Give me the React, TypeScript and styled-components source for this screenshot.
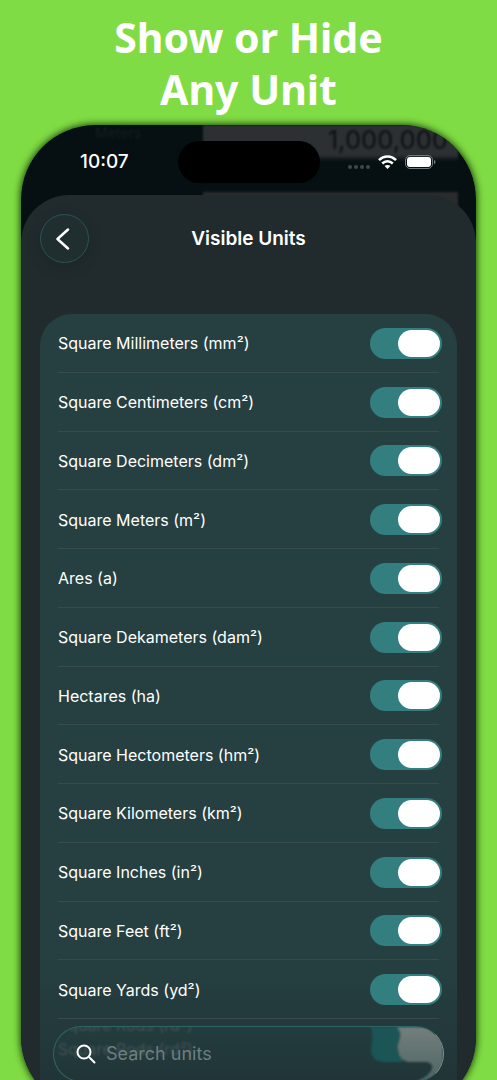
import React, { useState } from "react";
import styled, { createGlobalStyle } from "styled-components";

const GlobalStyle = createGlobalStyle`
  * { box-sizing: border-box; }
  body { margin: 0; background: #80dc44; color: #fff; font-family: Inter, "Liberation Sans", sans-serif; }
`;

const Page = styled.main`
  height: 100vh;
  overflow: hidden;
  padding: 11px 21px 0;
  background: #80dc44;
`;

const Headline = styled.h1`
  margin: 0 0 10px;
  text-align: center;
  font: 700 41px/52px "Noto Sans", "Open Sans", sans-serif;
`;

const Phone = styled.section`
  position: relative;
  display: flex;
  flex-direction: column;
  aspect-ratio: 455 / 986;
  overflow: hidden;
  border-radius: 74px;
  background: #061012;
`;

const PhoneShadow = styled.div`
  border-radius: 74px;
  box-shadow: 0 0 7px 1px rgba(10, 40, 0, 0.85);
`;

const Behind = styled.div`
  position: absolute;
  inset: 0 18px auto 182px;
  height: 90px;
  filter: blur(1px);
  background: linear-gradient(#2d3032 0 30px, #061012 36px 67px, #2a2b2d 67px);
  color: #0e1517;
  font-size: 25px;
  font-weight: 500;
  line-height: 30px;
  text-align: right;
  padding-right: 10px;
`;

const Ghost = styled.div`
  position: absolute;
  top: 0;
  left: 74px;
  filter: blur(1px);
  color: #151e20;
  font-size: 14px;
  line-height: 16px;
`;

const StatusBar = styled.header`
  position: relative;
  display: grid;
  grid-template-columns: 1fr 142px 1fr;
  align-items: center;
  height: 70px;
  padding: 4px 0 0;
`;

const Time = styled.time`
  padding-left: 59px;
  font-size: 19px;
  line-height: 22px;
  font-weight: 500;
`;

const Island = styled.div`
  height: 42px;
  border-radius: 21px;
  background: #000;
`;

const StatusIcons = styled.div`
  display: flex;
  align-items: center;
  justify-content: flex-end;
  gap: 8px;
  padding-right: 40px;
`;

const Sheet = styled.div`
  position: relative;
  flex: 1;
  display: flex;
  flex-direction: column;
  padding: 19px 19px 0;
  border-radius: 48px 48px 0 0;
  background: #212b2d;
`;

const TopBar = styled.div`
  display: grid;
  grid-template-columns: 49px 1fr 49px;
  align-items: center;
  margin-bottom: 51px;
`;

const BackButton = styled.button`
  display: grid;
  place-items: center;
  width: 49px;
  height: 49px;
  padding: 0 4px 0 0;
  border: 1px solid #2b5558;
  border-radius: 50%;
  background: #212e2f;
  box-shadow: 0 4px 12px rgba(20, 30, 32, 0.35);
  color: #fff;
`;

const Title = styled.h2`
  margin: 0;
  text-align: center;
  font-size: 19px;
  line-height: 24px;
  font-weight: 600;
`;

const Card = styled.div`
  flex: 1;
  border-radius: 32px 32px 0 0;
  background: linear-gradient(#264042 0 640px, #213436 770px);
`;

const UnitList = styled.ul`
  display: grid;
  grid-auto-rows: 1fr;
  height: 705px;
  margin: 0;
  padding: 0 15px 0 18px;
  list-style: none;
`;

const UnitRow = styled.li`
  display: flex;
  align-items: center;
  background: linear-gradient(#3a494c, #3a494c) left bottom / calc(100% - 3px) 1px no-repeat;
`;

const UnitLabel = styled.label`
  display: flex;
  flex: 1;
  align-items: center;
  justify-content: space-between;
  font-size: 16px;
  line-height: 24px;
`;

const Switch = styled.input`
  appearance: none;
  display: flex;
  justify-content: flex-start;
  width: 72px;
  height: 31px;
  margin: 0;
  padding: 2px;
  border-radius: 16px;
  background: #41585a;
  &::before {
    content: "";
    width: 42px;
    border-radius: 14px;
    background: #fff;
  }
  &:checked {
    justify-content: flex-end;
    background: #337e7e;
  }
`;

const SearchBar = styled.label`
  position: absolute;
  left: 32px;
  right: 32px;
  bottom: 29px;
  display: flex;
  align-items: center;
  gap: 10px;
  height: 56px;
  padding: 0 22px;
  overflow: hidden;
  border: 1px solid #2f6567;
  border-right-color: #83908f;
  border-radius: 28px;
  background: linear-gradient(#233c3e, #213537);
`;

const Refraction = styled.span<{ $top: number }>`
  position: absolute;
  left: 4px;
  top: ${(p) => p.$top}px;
  color: #435455;
  filter: blur(1px);
  font-size: 16px;
  line-height: 20px;
`;

const GlassGlow = styled.svg`
  position: absolute;
  top: 0;
  right: 0;
`;

const SearchInput = styled.input`
  position: relative;
  flex: 1;
  min-width: 0;
  padding: 0;
  border: 0;
  outline: 0;
  background: transparent;
  color: #fff;
  font: 400 18px/24px Inter, "Liberation Sans", sans-serif;
  &::placeholder { color: #6d7f80; opacity: 1; }
`;

const SearchIcon = styled.svg`
  position: relative;
`;

const units = [
  "Square Millimeters (mm²)",
  "Square Centimeters (cm²)",
  "Square Decimeters (dm²)",
  "Square Meters (m²)",
  "Ares (a)",
  "Square Dekameters (dam²)",
  "Hectares (ha)",
  "Square Hectometers (hm²)",
  "Square Kilometers (km²)",
  "Square Inches (in²)",
  "Square Feet (ft²)",
  "Square Yards (yd²)",
];

export default function App() {
  const [hidden, setHidden] = useState<string[]>([]);
  const toggle = (unit: string) =>
    setHidden((h) => (h.includes(unit) ? h.filter((u) => u !== unit) : [...h, unit]));

  return (
    <Page>
      <GlobalStyle />
      <Headline>
        Show or Hide
        <br />
        Any Unit
      </Headline>
      <PhoneShadow>
        <Phone>
          <Ghost aria-hidden>Meters</Ghost>
          <Behind aria-hidden>1,000,000</Behind>
          <StatusBar>
            <Time>10:07</Time>
            <Island />
            <StatusIcons>
              <svg width="22" height="14" viewBox="0 0 22 14" fill="#3d494c">
                <circle cx="2" cy="12" r="2" />
                <circle cx="8" cy="12" r="2" />
                <circle cx="14" cy="12" r="2" />
                <circle cx="20" cy="12" r="2" />
              </svg>
              <svg width="19" height="14" viewBox="0 0 19 14" fill="none" stroke="#fff" strokeWidth="2.5">
                <path d="M1 5.2C5.8.2 13.200.2 18 5.200" />
                <path d="M4.200 8.500c3-3 7.600-3 10.600 0" />
                <path d="M6.600 11 9.500 14l2.900-3c-1.600-1.500-4.200-1.500-5.800 0z" fill="#fff" stroke="none" />
              </svg>
              <svg width="31" height="14" viewBox="0 0 31 14">
                <rect x=".5" y=".5" width="27" height="13" rx="4.500" fill="none" stroke="#6f7b7d" />
                <rect x="2" y="2" width="24" height="10" rx="3" fill="#fff" />
                <path d="M29 5c2 .6 2 3.400 0 4z" fill="#6f7b7d" />
              </svg>
            </StatusIcons>
          </StatusBar>
          <Sheet>
            <TopBar>
              <BackButton aria-label="Back">
                <svg width="14" height="22" viewBox="0 0 14 22" fill="none" stroke="#fff" strokeWidth="2.500" strokeLinecap="round" strokeLinejoin="round">
                  <path d="M12 1.500 1.500 11 12 20.500" />
                </svg>
              </BackButton>
              <Title>Visible Units</Title>
            </TopBar>
            <Card>
              <UnitList>
                {units.map((unit) => (
                  <UnitRow key={unit}>
                    <UnitLabel>
                      {unit}
                      <Switch
                        type="checkbox"
                        role="switch"
                        checked={!hidden.includes(unit)}
                        onChange={() => toggle(unit)}
                      />
                    </UnitLabel>
                  </UnitRow>
                ))}
              </UnitList>
            </Card>
          </Sheet>
          <SearchBar>
            <Refraction $top={-12} aria-hidden>Square Rods (rd²)</Refraction>
            <Refraction $top={12} aria-hidden>Square Rods (rd²)</Refraction>
            <GlassGlow width="76" height="56" viewBox="0 0 76 56" aria-hidden>
              <defs>
                <linearGradient id="glow" x1="0" y1="0" x2="0" y2="1">
                  <stop offset="0" stopColor="#747f7c" />
                  <stop offset="1" stopColor="#4d6464" />
                </linearGradient>
                <filter id="soft"><feGaussianBlur stdDeviation="1" /></filter>
              </defs>
              <g filter="url(#soft)">
                <path d="M4 0h32v35H16Q4 34 4 22q3-12 0-22z" fill="#1f5456" />
                <path d="M30 0C36 6 33 12 31 18c0 10 3 16 11 17h18q8 2 4 9-5 8-20 12h32V0z" fill="url(#glow)" />
              </g>
            </GlassGlow>
            <SearchIcon width="20" height="20" viewBox="0 0 20 20" fill="none" stroke="#fff" strokeWidth="2" strokeLinecap="round" aria-hidden>
              <circle cx="8" cy="8" r="6.500" />
              <path d="m13 13 5.500 5.500" />
            </SearchIcon>
            <SearchInput type="search" placeholder="Search units" aria-label="Search units" />
          </SearchBar>
        </Phone>
      </PhoneShadow>
    </Page>
  );
}
